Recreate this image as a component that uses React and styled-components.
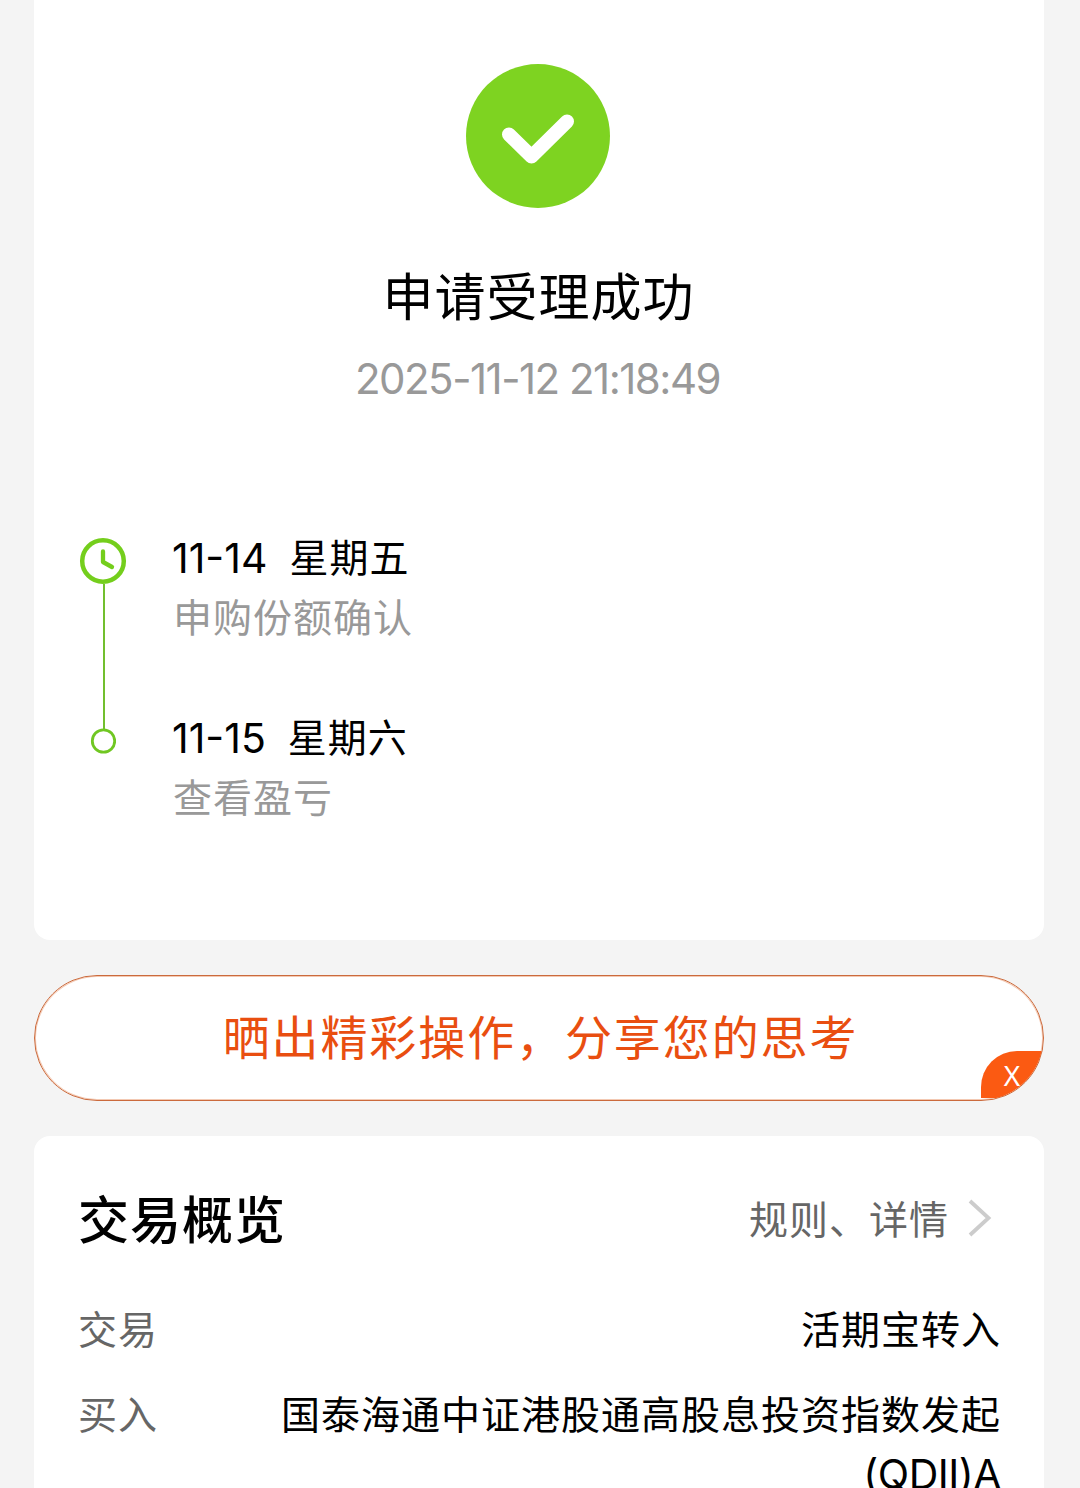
import React from "react";
import styled, { createGlobalStyle } from "styled-components";

const GlobalStyle = createGlobalStyle`
  body {
    margin: 0;
    background: #f4f4f4;
    overflow: hidden;
  }
`;

const Page = styled.div`
  box-sizing: border-box;
  width: 1080px;
  height: 1488px;
  padding: 0 36px 0 34px;
  overflow: hidden;
  background: #f4f4f4;
  color: #000;
  font-family: "Noto Sans CJK SC", sans-serif;
  font-size: 39px;
  line-height: 60px;
  letter-spacing: 1px;
  white-space: nowrap;
`;

const Latin = styled.span`
  font-family: Inter, sans-serif;
  font-size: ${({ $size }) => $size || 41}px;
  letter-spacing: ${({ $spacing }) => $spacing || 0}px;
`;

const ResultCard = styled.section`
  box-sizing: border-box;
  height: 940px;
  padding-top: 64px;
  background: #fff;
  border-radius: 0 0 16px 16px;
`;

const ResultHead = styled.div`
  display: flex;
  flex-direction: column;
  align-items: center;
  padding-right: 2px;

  svg {
    display: block;
  }
  h1 {
    margin: 46px 0 0;
    font-size: 51px;
    font-weight: 400;
    line-height: 80px;
    padding-left: 1px;
  }
  time {
    margin-top: 14px;
    padding-right: 1px;
    line-height: 58px;
    color: #999;
  }
`;

const Timeline = styled.div`
  display: flex;
  gap: 45px;
  margin-top: 121px;
  padding-left: 45px;
`;

const Rail = styled.div`
  display: flex;
  flex-direction: column;
  align-items: center;
  width: 48px;
  padding-top: 8px;

  svg {
    display: block;
  }
`;

const RailLine = styled.div`
  width: 2px;
  height: 145px;
  margin: -1px 0 -1px 1px;
  background: #72bf2e;
`;

const Steps = styled.div`
  display: flex;
  flex-direction: column;
  gap: 60px;
  margin-top: -4px;
`;

const Step = styled.div`
  .date {
    display: flex;
    gap: 22px;
    height: 60px;
  }
  .date ${Latin} {
    padding-top: 3px;
  }
  .desc {
    padding-left: 1px;
    color: #999;
  }
`;

const ShareButton = styled.div`
  box-sizing: border-box;
  position: relative;
  height: 126px;
  margin: 35px 0;
  padding-left: 3px;
  border: 1px solid #cb6a3c;
  border-radius: 63px;
  box-shadow: inset 0 0 0 1px rgba(226, 120, 66, 0.4);
  background: #fff;
  overflow: hidden;
  color: #e94e10;
  font-size: 47px;
  line-height: 117px;
  letter-spacing: 1.9px;
  text-align: center;
`;

const CloseTag = styled.span`
  position: absolute;
  right: 0;
  bottom: 2px;
  width: 62px;
  height: 47px;
  border-radius: 36px 0 0 0;
  background: #fb5a12;
  color: #fff;
  font-family: "Noto Sans", sans-serif;
  font-size: 28px;
  line-height: 48px;
  letter-spacing: 0;
`;

const OverviewCard = styled.section`
  box-sizing: border-box;
  height: 400px;
  padding: 41px 43px 0 44px;
  border-radius: 16px;
  background: #fff;
`;

const OverviewHead = styled.div`
  display: flex;
  justify-content: space-between;
  align-items: center;
  height: 80px;
  margin-bottom: 40px;

  h2 {
    margin: 0;
    font-size: 51px;
    font-weight: 500;
  }
`;

const RulesLink = styled.div`
  display: flex;
  align-items: center;
  gap: 19px;
  padding-right: 9px;
  color: #666;

  svg {
    margin-top: 2px;
  }
`;

const Row = styled.div`
  display: flex;
  justify-content: space-between;
  margin-bottom: 25px;
  text-align: right;

  .label {
    color: #666;
  }
`;

const steps = [
  { date: "11-14", day: "星期五", desc: "申购份额确认" },
  { date: "11-15", day: "星期六", desc: "查看盈亏" },
];

const SuccessIcon = () => (
  <svg width="144" height="144" viewBox="0 0 144 144" fill="none">
    <circle cx="72" cy="72" r="72" fill="#7ed321" />
    <path
      d="M43 70.500L65.500 92.500L101 57.500"
      stroke="#fff"
      strokeWidth="14"
      strokeLinecap="round"
      strokeLinejoin="round"
    />
  </svg>
);

const ClockIcon = () => (
  <svg width="48" height="48" viewBox="0 0 48 48" fill="none" stroke="#74ce1c">
    <circle cx="24" cy="24" r="20.800" strokeWidth="4.500" />
    <path
      d="M24 14.500V25L33 30"
      strokeWidth="4.300"
      strokeLinecap="round"
      strokeLinejoin="round"
    />
  </svg>
);

const DotIcon = () => (
  <svg width="26" height="26" viewBox="0 0 26 26" fill="none">
    <circle cx="13.500" cy="13" r="11.200" stroke="#70c722" strokeWidth="2.800" />
  </svg>
);

const ArrowIcon = () => (
  <svg width="24" height="38" viewBox="0 0 24 38" fill="none">
    <path d="M2 2L20.500 19L2 36" stroke="#ccc" strokeWidth="3.800" />
  </svg>
);

const App = () => {
  return (
    <Page lang="zh-CN">
      <GlobalStyle />
      <ResultCard>
        <ResultHead>
          <SuccessIcon />
          <h1>申请受理成功</h1>
          <time>
            <Latin $size={42} $spacing={-1.5}>
              2025-11-12 21:18:49
            </Latin>
          </time>
        </ResultHead>
        <Timeline>
          <Rail>
            <ClockIcon />
            <RailLine />
            <DotIcon />
          </Rail>
          <Steps>
            {steps.map(({ date, day, desc }) => (
              <Step key={date}>
                <div className="date">
                  <Latin>{date}</Latin>
                  <span>{day}</span>
                </div>
                <div className="desc">{desc}</div>
              </Step>
            ))}
          </Steps>
        </Timeline>
      </ResultCard>
      <ShareButton>
        晒出精彩操作，分享您的思考
        <CloseTag>X</CloseTag>
      </ShareButton>
      <OverviewCard>
        <OverviewHead>
          <h2>交易概览</h2>
          <RulesLink>
            规则、详情
            <ArrowIcon />
          </RulesLink>
        </OverviewHead>
        <Row>
          <span className="label">交易</span>
          <span>活期宝转入</span>
        </Row>
        <Row>
          <span className="label">买入</span>
          <span>
            国泰海通中证港股通高股息投资指数发起
            <br />
            <Latin $spacing={-0.5}>(QDII)A</Latin>
          </span>
        </Row>
      </OverviewCard>
    </Page>
  );
};

export default App;
